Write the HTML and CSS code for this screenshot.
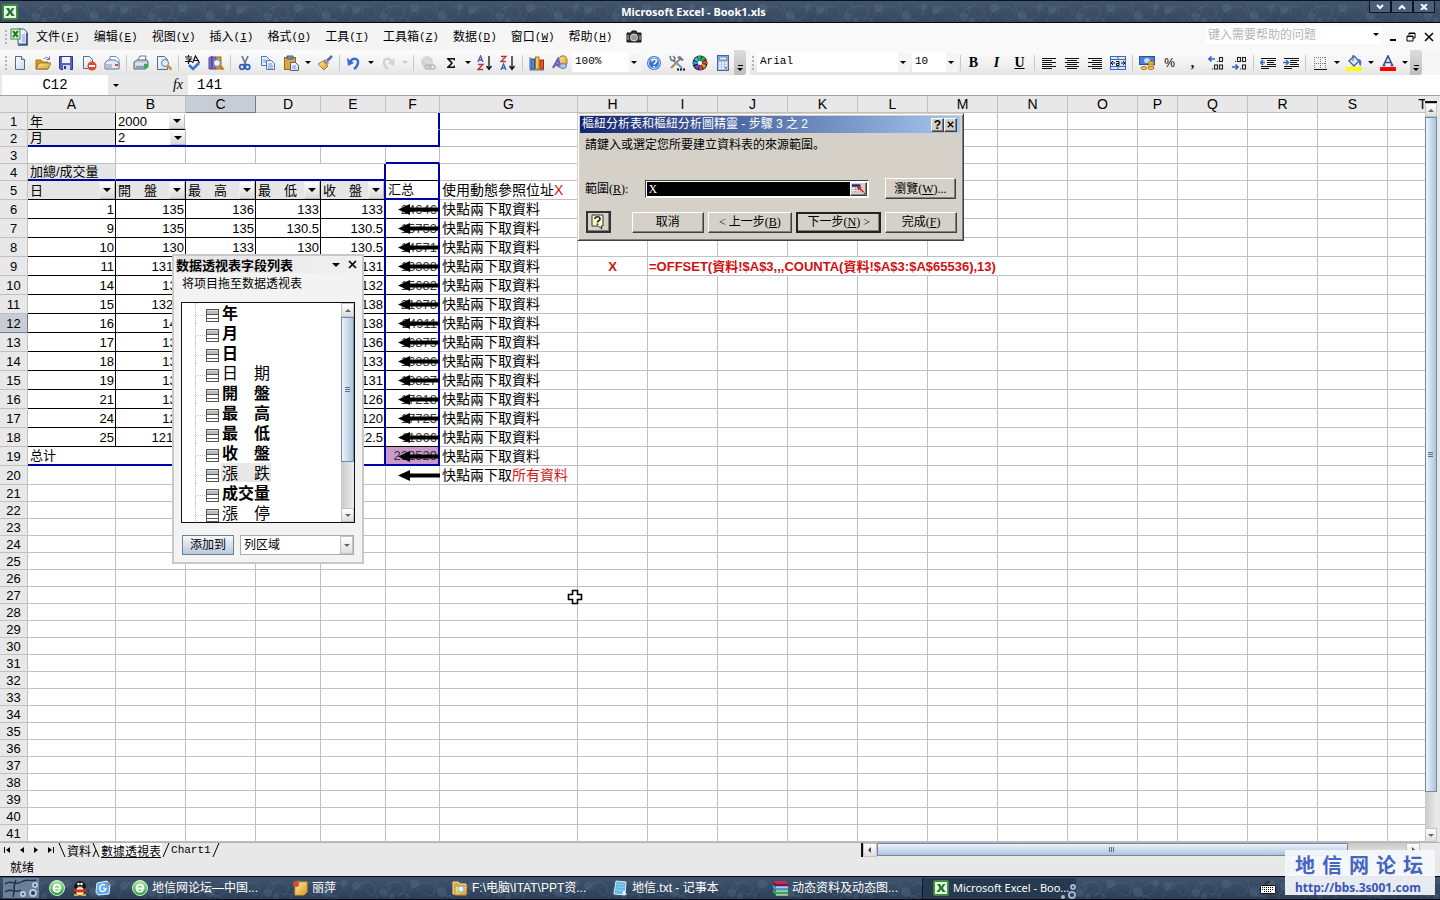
FILE: index.html
```
<!DOCTYPE html>
<html lang="zh">
<head>
<meta charset="utf-8">
<title>Microsoft Excel - Book1.xls</title>
<link rel="stylesheet" href="styles.css">
</head>
<body>
<svg class="defs" aria-hidden="true">
  <defs>
    <linearGradient id="paper" x1="0" y1="0" x2="1" y2="1"><stop offset="0" stop-color="#fff"/><stop offset="1" stop-color="#c9d8ee"/></linearGradient>
    <linearGradient id="gold" x1="0" y1="0" x2="1" y2="1"><stop offset="0" stop-color="#ffe9a0"/><stop offset="1" stop-color="#d99a28"/></linearGradient>
    <linearGradient id="orb" x1="0" y1="0" x2="0" y2="1"><stop offset="0" stop-color="#a8f0a0"/><stop offset="1" stop-color="#1f9a3a"/></linearGradient>
    <pattern id="floral" width="116" height="24" patternUnits="userSpaceOnUse">
      <g fill="none" stroke="#8ba3bd" stroke-opacity=".16">
        <path d="M2 22C8 2 26 2 28 12c1 8-10 8-9 1M28 24C32 6 50 0 56 9c3 7-6 11-9 5M58 22c4-14 20-22 28-12 4 8-7 12-10 5M88 2c-2 14 14 22 22 12 4-7-5-12-9-5"/>
        <path d="M10 4c5 2 6 6 3 9M38 3c5 3 5 8 1 12M68 2c4 4 4 9 0 12M98 20c4-2 8 0 9 3M50 20c3-4 9-4 11 0"/>
      </g>
      <g fill="#8ba3bd" fill-opacity=".15"><circle cx="36" cy="16" r="4"/><circle cx="44" cy="19" r="3"/><circle cx="8" cy="9" r="4"/><circle cx="66" cy="7" r="4"/><circle cx="94" cy="15" r="5"/><circle cx="112" cy="6" r="3"/></g>
    </pattern>
    <symbol id="i-excel" viewBox="0 0 16 16"><rect x="1" y="1" width="14" height="14" rx="1" fill="#e9f5e4" stroke="#3f8a3c" stroke-width="2"/><path d="M4 4h3l1.500 2.500L10 4h2.500L9.800 8l2.900 4H9.600L8 9.500 6.300 12H3.500l3-4z" fill="#1e7a2a"/></symbol>
    <symbol id="i-book" viewBox="0 0 18 18"><path d="M8 1h6l3 3v12H8z" fill="url(#paper)" stroke="#3f5f96"/><path d="M17 5v12H8" fill="none" stroke="#2c4a80" stroke-width="1.500"/><path d="M12 7h3M12 9h3M12 11h3M12 13h3" stroke="#8aa3cc"/><rect x="1" y="1" width="9" height="10" fill="#e3f3de" stroke="#3f8a3c"/><path d="M3 3l5 6M8 3L3 9" stroke="#1e7a2a" stroke-width="2"/></symbol>
    <symbol id="i-new" viewBox="0 0 16 16"><path d="M3.500 1.500h6l3 3v10h-9z" fill="url(#paper)" stroke="#55698c"/><path d="M9.500 1.500v3h3" fill="#fff" stroke="#55698c"/></symbol>
    <symbol id="i-open" viewBox="0 0 16 16"><path d="M1 5h5l1 2h6v7H1z" fill="#d79a2c" stroke="#a2741c"/><path d="M1 14l3-6h12l-3 6z" fill="url(#gold)" stroke="#a2741c"/><path d="M9 4c1-2 4-2 5 0M14.500 1.500V4.500h-3" fill="none" stroke="#5572a8"/></symbol>
    <symbol id="i-save" viewBox="0 0 16 16"><path d="M1.500 1.500h13v13h-12l-1-1z" fill="#5b5fc4" stroke="#33358a"/><rect x="4" y="2" width="8" height="6" fill="#f2f4ff"/><rect x="5" y="10" width="7" height="5" fill="#d5d9ee"/><rect x="6" y="11" width="2" height="3" fill="#33358a"/></symbol>
    <symbol id="i-perm" viewBox="0 0 16 16"><path d="M2.500 1.500h6l3 3v9h-9z" fill="url(#paper)" stroke="#55698c"/><circle cx="11" cy="11" r="4.500" fill="#dc4a26"/><path d="M8 11h6" stroke="#fff" stroke-width="2"/></symbol>
    <symbol id="i-mail" viewBox="0 0 16 16"><path d="M6 1.500h6l3 3v7H6z" fill="#fff" stroke="#788bb0"/><path d="M1 8l3-3h7l4 3v6H1z" fill="#e4ebf6" stroke="#61779f"/><path d="M2 10h6M2 12h6" stroke="#8295b8"/><rect x="11" y="9" width="3" height="2" fill="#d64b31"/></symbol>
    <symbol id="i-print" viewBox="0 0 16 16"><path d="M5 5l2-4h6l-1 5" fill="#fff" stroke="#667a9a"/><path d="M1 7l3-2h10l1 2v5l-3 2H1z" fill="#c3cddb" stroke="#55657e"/><path d="M2 9h9" stroke="#fff"/><path d="M3 12h8" stroke="#5c6f8f"/><rect x="11" y="9" width="4" height="4" fill="#35b34a"/></symbol>
    <symbol id="i-preview" viewBox="0 0 16 16"><path d="M1.500 1.500h7l3 3v10h-10z" fill="url(#paper)" stroke="#55698c"/><circle cx="9" cy="8" r="3.500" fill="#dff0fb" stroke="#697c94"/><path d="M11.500 10.500l4 4" stroke="#d58d37" stroke-width="2.500"/></symbol>
    <symbol id="i-spell" viewBox="0 0 16 16"><path d="M0 2h7M3.500 0v2M1 4h5L3.500 6v3M0 6.500h7M7.500 8l3-7 4 7M9 5.500h5" fill="none" stroke="#111" stroke-width="1.200"/><path d="M4 10l4 4 6-6" fill="none" stroke="#3a72cf" stroke-width="2.600"/></symbol>
    <symbol id="i-research" viewBox="0 0 16 16"><path d="M1 3l3-2v13H1zM4 2h4v12H4z" fill="#8270c5" stroke="#54469a"/><rect x="8" y="2" width="5" height="12" fill="#e1a43c" stroke="#996d1e"/><circle cx="9" cy="8" r="3.500" fill="#e4f3fc" stroke="#697c94"/><path d="M11.500 10.500l4 4" stroke="#c57b26" stroke-width="2.500"/></symbol>
    <symbol id="i-cut" viewBox="0 0 16 16"><path d="M5 1l4 9M11 1L7 10" stroke="#6a7c94" stroke-width="1.800"/><circle cx="5" cy="12" r="2.300" fill="none" stroke="#2b5cb5" stroke-width="1.700"/><circle cx="10.500" cy="12" r="2.300" fill="none" stroke="#2b5cb5" stroke-width="1.700"/></symbol>
    <symbol id="i-copy" viewBox="0 0 16 16"><path d="M1.500 1.500h5l3 3v6h-8z" fill="#eaf1fd" stroke="#4c72b8"/><path d="M6.500 5.500h5l3 3v6h-8z" fill="#eaf1fd" stroke="#4c72b8"/><path d="M3 5h3M3 7h3M8 9h4M8 11h5M8 13h5" stroke="#6d91d2"/></symbol>
    <symbol id="i-paste" viewBox="0 0 16 16"><rect x="1.500" y="2.500" width="11" height="12" fill="#dca53e" stroke="#936a1d"/><path d="M4 1h6v3H4z" fill="#8090a8" stroke="#4b5a74"/><path d="M7.500 7.500h5l3 3v5h-8z" fill="url(#paper)" stroke="#4c5f88"/><path d="M9 11h4M9 13h4" stroke="#7f97c0"/></symbol>
    <symbol id="i-brush" viewBox="0 0 16 16"><path d="M15 1l-5 5" stroke="#6d63b5" stroke-width="2.500"/><path d="M8 4l4 4-2 2-4-4z" fill="#8b94a8"/><path d="M6 6l5 5-4 4-6-6z" fill="url(#gold)" stroke="#a08530"/></symbol>
    <symbol id="i-undo" viewBox="0 0 16 16"><path d="M4 8c2-6 9-5 8 0-.500 3-2.500 5-4 6" fill="none" stroke="#3a6ad0" stroke-width="2.500"/><path d="M1 3l1 8 6-3z" fill="#3a6ad0"/></symbol>
    <symbol id="i-redo" viewBox="0 0 16 16"><path d="M12 8c-2-6-9-5-8 0 .500 3 2.500 5 4 6" fill="none" stroke="#d2d2d2" stroke-width="2.500"/><path d="M15 3l-1 8-6-3z" fill="#d2d2d2"/></symbol>
    <symbol id="i-link" viewBox="0 0 16 16"><circle cx="7" cy="7" r="6" fill="#d4d4d4"/><path d="M3 4c4 2 5 4 8 3" stroke="#e8e8e8" fill="none"/><rect x="5" y="10" width="6" height="4" rx="2" fill="none" stroke="#bbb" stroke-width="1.500"/><rect x="9" y="10" width="6" height="4" rx="2" fill="none" stroke="#bbb" stroke-width="1.500"/></symbol>
    <symbol id="i-sum" viewBox="0 0 16 16"><path d="M12 5.500V3H4v1l4 4-4 4v1h8v-2.500h-1l-.500 1H7L10 8 7 4.500h3.500l.500 1z" fill="#111"/></symbol>
    <symbol id="i-az" viewBox="0 0 16 16"><path d="M1 7l2.500-6L6 7M2 5h3" fill="none" stroke="#3b5fae" stroke-width="1.300"/><path d="M1 9.500h5l-5 5h5" fill="none" stroke="#b03a3a" stroke-width="1.300"/><path d="M12 1v12M9.500 11l2.500 3.500 2.500-3.500" fill="none" stroke="#111" stroke-width="1.300"/></symbol>
    <symbol id="i-za" viewBox="0 0 16 16"><path d="M1 1.500h5l-5 5h5" fill="none" stroke="#b03a3a" stroke-width="1.300"/><path d="M1 15l2.500-6L6 15M2 13h3" fill="none" stroke="#3b5fae" stroke-width="1.300"/><path d="M12 1v12M9.500 11l2.500 3.500 2.500-3.500" fill="none" stroke="#111" stroke-width="1.300"/></symbol>
    <symbol id="i-chart" viewBox="0 0 16 16"><path d="M1 2v13h14" fill="none" stroke="#4a6db0"/><rect x="2" y="4" width="3.500" height="10" fill="#4e8ae0" stroke="#2b5294"/><rect x="6.500" y="2" width="3.500" height="12" fill="#f6c44c" stroke="#a77417"/><rect x="11" y="5" width="3.500" height="9" fill="#e0562c" stroke="#96300f"/></symbol>
    <symbol id="i-draw" viewBox="0 0 16 16"><path d="M6 5l3-4h4l2 3v5l-4 3H6z" fill="url(#gold)" stroke="#a07b2b"/><path d="M1 13L6 4l3 9M3 10h5" fill="none" stroke="#6465bd" stroke-width="2.300"/><ellipse cx="11" cy="11" rx="3.500" ry="2.500" fill="#b9c2e8" stroke="#6876b0"/></symbol>
    <symbol id="i-help" viewBox="0 0 16 16"><circle cx="8" cy="8" r="7" fill="#3c74d4"/><circle cx="8" cy="8" r="5.500" fill="none" stroke="#cfe0fa"/><path d="M5.700 6.500c0-3 4.800-3 4.800-.400 0 1.700-2.300 1.700-2.300 3.400M8.200 11v1.500" fill="none" stroke="#fff" stroke-width="1.600"/></symbol>
    <symbol id="i-tools" viewBox="0 0 16 16"><path d="M2 13L11 4" stroke="#a98a53" stroke-width="2.200"/><path d="M8 2l3-1 4 4-2 1-3-2z" fill="#63758f"/><path d="M4 5l9 8" stroke="#7e93ae" stroke-width="2"/><path d="M1 1l1 4 3 1 1-3-2-2" fill="none" stroke="#61748c" stroke-width="1.500"/><path d="M8 14.500h2M11 14.500h2M14 14.500h2" stroke="#111" stroke-width="2"/></symbol>
    <symbol id="i-wheel" viewBox="0 0 16 16"><circle cx="8" cy="8" r="7.500" fill="#151515"/><path d="M8 8L5 1.500A7 7 0 0 1 9 1z" fill="#17b890"/><path d="M8 8l2-7 4 3z" fill="#2ca84e"/><path d="M8 8l6.500-3 .500 4z" fill="#e34b2c"/><path d="M8 8l6.500 2-2.500 4z" fill="#e98d2a"/><path d="M8 8l3 6.500-4 .500z" fill="#d13d83"/><path d="M8 8l-2 6.500-4-3z" fill="#6d4fc4"/><path d="M8 8l-7 2 .500-4z" fill="#3a9be0"/><path d="M8 8L2 5l2.500-3z" fill="#2fd0c0"/><circle cx="8" cy="8" r="2" fill="#fff"/></symbol>
    <symbol id="i-calc" viewBox="0 0 16 16"><rect x="2.500" y=".500" width="11" height="15" fill="#a9c3f0" stroke="#4464a4"/><rect x="4" y="2" width="8" height="3" fill="#f2f7ff" stroke="#5b79b4"/><path d="M4 8h8M4 10.500h8M4 13h8" stroke="#fff" stroke-width="1.700" stroke-dasharray="2 1"/><path d="M10 13h2" stroke="#d04a35" stroke-width="1.700"/></symbol>
    <symbol id="i-left" viewBox="0 0 16 16"><path d="M1 3.500h14M1 5.500h10M1 7.500h14M1 9.500h10M1 11.500h14M1 13.500h10" stroke="#111"/></symbol>
    <symbol id="i-center" viewBox="0 0 16 16"><path d="M1 3.500h14M3 5.500h10M1 7.500h14M3 9.500h10M1 11.500h14M3 13.500h10" stroke="#111"/></symbol>
    <symbol id="i-right" viewBox="0 0 16 16"><path d="M1 3.500h14M5 5.500h10M1 7.500h14M5 9.500h10M1 11.500h14M5 13.500h10" stroke="#111"/></symbol>
    <symbol id="i-merge" viewBox="0 0 16 16"><rect x=".500" y="1.500" width="15" height="13" fill="#dbe7fa" stroke="#3e69b5"/><path d="M0 4.500h16M0 11.500h16M8 1v3M8 12v3" stroke="#3e69b5"/><path d="M1 8h4M3 6L1 8l2 2M15 8h-4M13 6l2 2-2 2M6 6.500h3v4H6.500v-2H9" fill="none" stroke="#111"/></symbol>
    <symbol id="i-money" viewBox="0 0 16 16"><rect x=".500" y="1.500" width="15" height="8" fill="#4c7dd2" stroke="#2f549c"/><ellipse cx="8" cy="5.500" rx="3" ry="2.500" fill="#c6dafa"/><ellipse cx="12" cy="8" rx="3" ry="1.500" fill="#f8cd55" stroke="#a9781c"/><ellipse cx="12" cy="10.500" rx="3" ry="1.500" fill="#f8cd55" stroke="#a9781c"/><ellipse cx="12" cy="13" rx="3" ry="1.500" fill="#f8cd55" stroke="#a9781c"/><ellipse cx="5" cy="13" rx="3" ry="1.500" fill="#f8cd55" stroke="#a9781c"/></symbol>
    <symbol id="i-decl" viewBox="0 0 16 16"><path d="M1 4h6M3.500 1.500L1 4l2.500 2.500" fill="none" stroke="#3566c4" stroke-width="1.700"/><g fill="none" stroke="#222" stroke-width="1.100"><rect x="11.500" y="2.500" width="3" height="4"/><rect x="6.500" y="10" width="3" height="4"/><rect x="11.500" y="10" width="3" height="4"/><path d="M9 6.500h1M4 14h1"/></g></symbol>
    <symbol id="i-decr" viewBox="0 0 16 16"><path d="M1 12h6M4.500 9.500L7 12l-2.500 2.500" fill="none" stroke="#3566c4" stroke-width="1.700"/><g fill="none" stroke="#222" stroke-width="1.100"><rect x="6.500" y="2.500" width="3" height="4"/><rect x="11.500" y="2.500" width="3" height="4"/><rect x="11.500" y="10" width="3" height="4"/><path d="M4 6.500h1M9 14h1"/></g></symbol>
    <symbol id="i-outdent" viewBox="0 0 16 16"><path d="M1 3.500h15M7 5.500h9M7 7.500h7M7 9.500h9M1 11.500h15M1 13.500h8" stroke="#111"/><path d="M0 7.500h5M3 5L.500 7.500 3 10" fill="none" stroke="#3566c4" stroke-width="1.500"/></symbol>
    <symbol id="i-indent" viewBox="0 0 16 16"><path d="M1 3.500h15M7 5.500h9M7 7.500h7M7 9.500h9M1 11.500h15M1 13.500h8" stroke="#111"/><path d="M0 7.500h5M3 5l2.500 2.500L3 10" fill="none" stroke="#3566c4" stroke-width="1.500"/></symbol>
    <symbol id="i-borders" viewBox="0 0 16 16"><path d="M2 2.500h12M2 8.500h12M2.500 2v12M8.500 2v12M13.500 2v12" stroke="#777" stroke-dasharray="1 1" fill="none"/><path d="M2 14.500h13" stroke="#111"/></symbol>
    <symbol id="i-fill" viewBox="0 0 16 16"><path d="M3 6l5-5 5 5-5 5z" fill="#dce8f8" stroke="#3c5f9e" stroke-width="1.300"/><path d="M7 6V0" stroke="#3c5f9e"/><path d="M12 4c4 0 4 4 2.500 7-2-1-1-4-3-5z" fill="#3f74cf"/><path d="M0 12h16v4H0z" fill="#ff0"/></symbol>
    <symbol id="i-color" viewBox="0 0 16 16"><path d="M3.500 10.500L8 1l4.500 9.500M5 7.500h6M2.500 10.500h3M10.500 10.500h3" fill="none" stroke="#34548c" stroke-width="1.700"/><path d="M0 12h16v4H0z" fill="red"/></symbol>
    <symbol id="i-camera" viewBox="0 0 16 16"><path d="M1 4h4l1-2h4l1 2h4v9H1z" fill="#333" stroke="#111"/><circle cx="8" cy="8.500" r="3.500" fill="#999" stroke="#ddd"/><path d="M2 6v5M14 6v5" stroke="#bbb"/></symbol>
    <symbol id="i-browser" viewBox="0 0 16 16"><circle cx="8" cy="8" r="7.500" fill="url(#orb)" stroke="#d8f0d8"/><path d="M4.500 8.500h7c0-5-7-5-7 0 0 4 5 4 6.500 1.500" fill="none" stroke="#fff" stroke-width="1.800"/></symbol>
    <symbol id="i-penguin" viewBox="0 0 16 16"><ellipse cx="8" cy="8" rx="6" ry="7" fill="#141414"/><ellipse cx="8" cy="11" rx="4" ry="4" fill="#fff"/><circle cx="6.500" cy="4" r="1.300" fill="#fff"/><circle cx="9.500" cy="4" r="1.300" fill="#fff"/><path d="M5.500 6.500h5L8 8z" fill="#f2a51c"/><path d="M2 8c3 2 9 2 12 0v3c-3 2-9 2-12 0z" fill="#d9301e"/><path d="M2 14h5v2H2zM9 14h5v2H9z" fill="#f2a51c"/></symbol>
    <symbol id="i-mailer" viewBox="0 0 16 16"><path d="M2 3l10-2 3 3-1 10-11 1-2-3z" fill="#5cacf0" stroke="#e3f3ff"/><path d="M10 5c-4-2-6 2-5 5 1 2 5 2 6-1l-3-1" fill="none" stroke="#fff" stroke-width="1.500"/><path d="M13 3l2 2" stroke="#e55b2c" stroke-width="2"/></symbol>
    <symbol id="i-note" viewBox="0 0 16 16"><path d="M3 2h12v10l-3 3H3z" fill="url(#gold)" stroke="#d99a28"/><circle cx="4" cy="4" r="3" fill="#d84832"/></symbol>
    <symbol id="i-folder" viewBox="0 0 16 16"><path d="M1 2h5l2 2h6v10H1z" fill="#e5a93b" stroke="#ffe39a"/><path d="M3 6h12l-1 9H3z" fill="url(#gold)" stroke="#c89032"/><circle cx="9" cy="9" r="3" fill="#dff3fb" stroke="#8fb6c8"/></symbol>
    <symbol id="i-notepad" viewBox="0 0 16 16"><path d="M4 1l10 1-1 13-11-1z" fill="#67b7e8" stroke="#d5effc"/><path d="M5 4l7 .500M5 7l7 .500M4 10l7 .500" stroke="#8fd0f2"/><path d="M12 10l3 5-5-1z" fill="#f0f8ff"/></symbol>
    <symbol id="i-rar" viewBox="0 0 16 16"><path d="M1 1h12l3 3H4z" fill="#c72a61"/><path d="M4 4h12v2H4zM1 1l3 3v2L1 4z" fill="#7e1438"/><path d="M1 5l3 2h12v3H4L1 8z" fill="#3c9ee0"/><path d="M1 9l3 2h12v4H4l-3-3z" fill="#33a846"/><path d="M4 7h12M4 11h12M4 15h12" stroke="#fff"/></symbol>
    <symbol id="i-keyboard" viewBox="0 0 16 16"><path d="M5 4c0-2 3-2 5-2" stroke="#111" fill="none"/><rect x=".500" y="5.500" width="15" height="8" rx="1" fill="#fff" stroke="#111"/><path d="M2 7.500h12M2 9.500h12M4 11.500h8" stroke="#111" stroke-dasharray="1 1"/></symbol>
    <symbol id="i-field" viewBox="0 0 14 14"><rect x=".500" y="1.500" width="12" height="12" fill="#fff" stroke="#555"/><path d="M1 3.500h11M1 5h11" stroke="#bbb" stroke-width="2"/><path d="M1 6.500h11M1 10.500h11" stroke="#555"/></symbol>
    <symbol id="i-x" viewBox="0 0 9 9"><path d="M1 1l7 7M8 1L1 8" stroke="currentColor" stroke-width="1.700"/></symbol>
    <symbol id="i-arrow" viewBox="0 0 42 11"><path d="M0 5.500L12 0v11z"/><path d="M10 3.500h32v4H10z"/></symbol>
  </defs>
</svg>

<header class="titlebar">
  <svg class="floral" aria-hidden="true"><rect width="100%" height="100%" fill="url(#floral)"/></svg>
  <svg class="icon"><use href="#i-excel"/></svg>
  <h1>Microsoft Excel - Book1.xls</h1>
  <div class="winbtns">
    <button aria-label="最小化"><svg viewBox="0 0 8 6"><path d="M1 1l3 3 3-3"/></svg></button>
    <button aria-label="还原"><svg viewBox="0 0 8 6"><path d="M1 5l3-3 3 3"/></svg></button>
    <button aria-label="关闭"><svg viewBox="0 0 8 6"><path d="M1 0l6 6M7 0L1 6"/></svg></button>
  </div>
</header>

<nav class="menubar">
  <i class="grip"></i>
  <svg class="book"><use href="#i-book"/></svg>
  <div class="menus">
    <button>文件<kbd>(<u>F</u>)</kbd></button><button>编辑<kbd>(<u>E</u>)</kbd></button><button>视图<kbd>(<u>V</u>)</kbd></button><button>插入<kbd>(<u>I</u>)</kbd></button><button>格式<kbd>(<u>O</u>)</kbd></button><button>工具<kbd>(<u>T</u>)</kbd></button><button>工具箱<kbd>(<u>Z</u>)</kbd></button><button>数据<kbd>(<u>D</u>)</kbd></button><button>窗口<kbd>(<u>W</u>)</kbd></button><button>帮助<kbd>(<u>H</u>)</kbd></button>
    <button aria-label="照相机"><svg class="icon"><use href="#i-camera"/></svg></button>
  </div>
  <div class="ask"><input type="text" aria-label="帮助问题" placeholder="键入需要帮助的问题"><b class="tri"></b></div>
  <div class="docbtns">
    <button aria-label="最小化窗口"><svg viewBox="0 0 10 10"><path d="M2 8h6" stroke-width="2"/></svg></button>
    <button aria-label="还原窗口"><svg viewBox="0 0 10 10"><path d="M3 3V1h6v5H7M3 1.500h6M1 4h6v5H1zM1 4.500h6"/></svg></button>
    <button aria-label="关闭窗口"><svg viewBox="0 0 10 10"><path d="M1 1l8 8M9 1L1 9" stroke-width="1.500"/></svg></button>
  </div>
</nav>

<div class="toolbars">
  <div class="toolbar" id="standard"></div>
  <div class="toolbar" id="formatting"></div>
</div>

<div class="formulabar">
  <input class="namebox" aria-label="名称框" value="C12">
  <div class="fx"><b class="tri"></b><i>fx</i></div>
  <input class="formula" aria-label="编辑栏" value="141">
</div>

<main class="sheet">
  <div class="grid">
    <table id="cells"></table>
  </div>
  <div class="vscroll">
    <div class="split"></div><button class="sb" aria-label="向上"><b class="up"></b></button>
    <div class="track"><div class="thumb"></div></div>
    <button class="sb" aria-label="向下"><b class="down"></b></button>
  </div>

  <section class="fields">
    <header><h2>数据透视表字段列表</h2><b class="tri"></b><button aria-label="关闭"><svg viewBox="0 0 9 9"><use href="#i-x"/></svg></button></header>
    <p>将项目拖至数据透视表</p>
    <div class="listbox">
      <ul>
        <li class="used">年</li><li class="used">月</li><li class="used">日</li><li>日　期</li><li class="used">開　盤</li><li class="used">最　高</li><li class="used">最　低</li><li class="used">收　盤</li><li class="current">漲　跌</li><li class="used">成交量</li><li>漲　停</li>
      </ul>
      <div class="listscroll">
        <button class="sb" aria-label="向上"><b class="up"></b></button>
        <div class="track"><div class="thumb"></div></div>
        <button class="sb" aria-label="向下"><b class="down"></b></button>
      </div>
    </div>
    <footer><button class="add">添加到</button><div class="area"><select aria-label="区域"><option>列区域</option></select><span class="sb"><b class="down"></b></span></div></footer>
  </section>

  <section class="wizard" role="dialog" aria-labelledby="wiz">
    <header><h2 id="wiz">樞紐分析表和樞紐分析圖精靈 - 步驟 3 之 2</h2><button aria-label="說明">?</button><button aria-label="關閉"><svg viewBox="0 0 9 9"><use href="#i-x"/></svg></button></header>
    <p>請鍵入或選定您所要建立資料表的來源範圍。</p>
    <div class="range">
      <label for="range">範圍(<u>R</u>):</label>
      <div class="ref"><input id="range" value="X"><button aria-label="摺疊"><svg viewBox="0 0 16 12"><path d="M1 1h9v3H1z" fill="#162a7a"/><path d="M1 4h9v5H1M5 4v5M1 6.500h9" fill="#fff" stroke="#aaa"/><path d="M6 3l6 1-2 1 4 4-1 1-4-4-1 2z" fill="#e01818"/><path d="M14 10h1v1h-1z"/></svg></button></div>
      <button class="w">瀏覽(<u>W</u>)...</button>
    </div>
    <div class="steps">
      <button class="tip" aria-label="說明"><svg viewBox="0 0 16 16"><path d="M2 1h11v11h-2l1 3-4-3H2z" fill="#ffffb8" stroke="#333"/><path d="M5 5c0-3 5-3 5 0 0 2-2.500 1.500-2.500 3.500M7.500 9.500V11" fill="none" stroke="#16207a" stroke-width="1.700"/></svg></button>
      <button class="n">取消</button><button class="m">&lt; 上一步(<u>B</u>)</button><button class="m default">下一步(<u>N</u>) &gt;</button><button class="n">完成(<u>F</u>)</button>
    </div>
  </section>

  <svg class="cursor" viewBox="0 0 16 16"><path d="M5.500 1.500h5v4h4v5h-4v4h-5v-4h-4v-5h4z" fill="#fff" stroke="#000" stroke-width="1.600"/></svg>
</main>

<div class="tabbar">
  <div class="nav">
    <button aria-label="第一个"><svg viewBox="0 0 6 6"><path d="M0 0h1v6H0zM6 0v6L2 3z"/></svg></button>
    <button aria-label="上一个"><svg viewBox="0 0 6 6"><path d="M5 0v6L1 3z"/></svg></button>
    <button aria-label="下一个"><svg viewBox="0 0 6 6"><path d="M1 0v6l4-3z"/></svg></button>
    <button aria-label="最后一个"><svg viewBox="0 0 6 6"><path d="M0 0v6l4-3zM5 0h1v6H5z"/></svg></button>
  </div>
  <div class="tabs">
    <svg class="edge" viewBox="0 0 8 14"><path d="M1 0l6 14"/></svg><button>資料</button><svg class="edge" viewBox="0 0 8 14"><path d="M1 0l6 14M1 14l3-7"/></svg><button class="on">數據透視表</button><svg class="edge" viewBox="0 0 8 14"><path d="M7 0L1 14"/></svg><button class="latin">Chart1</button><svg class="edge" viewBox="0 0 8 14"><path d="M7 0L1 14"/></svg>
  </div>
  <div class="hscroll">
    <button class="sb" aria-label="向左"><b class="lt"></b></button>
    <div class="track"><div class="thumb"></div></div>
    <button class="sb" aria-label="向右"><b class="rt"></b></button>
  </div>
</div>

<div class="status"><span>就绪</span><span class="num">数字</span></div>

<footer class="taskbar">
  <svg class="floral" aria-hidden="true"><rect width="100%" height="100%" fill="url(#floral)"/></svg>
  <button class="start" aria-label="开始"><svg viewBox="0 0 36 20"><path d="M0 0h36v20H0z" fill="#6a809b"/><path d="M2 6c6-5 10 2 16-2s10 0 15-2M2 14c6-5 10 2 16-2M13 2c-3 5-1 11-3 17" fill="none" stroke="#22344a" stroke-width="1.500"/><g fill="#273b53" stroke="#b7c8da" stroke-width="2"><circle cx="20" cy="16" r="2"/><circle cx="30" cy="15" r="3"/><circle cx="32" cy="7" r="2"/></g></svg></button>
  <div class="quick">
    <button aria-label="浏览器"><svg class="icon"><use href="#i-browser"/></svg></button>
    <button aria-label="QQ"><svg class="icon"><use href="#i-penguin"/></svg></button>
    <button aria-label="邮件"><svg class="icon"><use href="#i-mailer"/></svg></button>
  </div>
  <div class="tasks">
    <button><svg class="icon"><use href="#i-browser"/></svg>地信网论坛—中国...</button>
    <button><svg class="icon"><use href="#i-note"/></svg>丽萍</button>
    <button><svg class="icon"><use href="#i-folder"/></svg>F:\电脑\ITAT\PPT资...</button>
    <button><svg class="icon"><use href="#i-notepad"/></svg>地信.txt - 记事本</button>
    <button><svg class="icon"><use href="#i-rar"/></svg>动态资料及动态图...</button>
    <button class="active"><svg class="icon"><use href="#i-excel"/></svg>Microsoft Excel - Boo...<svg class="flowers" viewBox="0 0 18 18"><g fill="#273b53" stroke="#9fb6cb" stroke-width="2"><circle cx="13" cy="5" r="2"/><circle cx="12" cy="13" r="3"/><circle cx="3" cy="15" r="1"/></g></svg></button>
  </div>
  <svg class="icon keyboard"><use href="#i-keyboard"/></svg>
</footer>

<aside class="watermark"><strong>地信网论坛</strong><a href="#">http://bbs.3s001.com</a></aside>
<script src="app.js"></script>
</body>
</html>
```
FILE: styles.css
```
* { box-sizing: border-box; }
body {
  margin: 0; height: 100vh; display: flex; flex-direction: column; overflow: hidden; position: relative;
  font: 12px/16px "Liberation Sans", "Noto Sans CJK SC", sans-serif; color: #000; background: #e8e8e8;
}
button, input, select { font: inherit; color: inherit; border: 0; padding: 0; margin: 0; background: none; border-radius: 0; }
h1, h2, p, ul { margin: 0; padding: 0; }
.defs { position: absolute; width: 0; height: 0; }
.icon { width: 16px; height: 16px; flex: none; display: block; }
.tri { width: 0; height: 0; flex: none; border: 3px solid transparent; border-top-color: #000; border-bottom: 0; }
.floral { position: absolute; inset: 0; width: 100%; height: 100%; }

.titlebar {
  flex: none; height: 23px; display: flex; align-items: center; padding-left: 2px; position: relative;
  background: linear-gradient(#43566e, #33475f); border-top: 1px solid #0b1220; border-bottom: 1px solid #05070c;
}
.titlebar > * { z-index: 1; }
.titlebar .floral { z-index: 0; }
.titlebar h1 { flex: 1; text-align: center; color: #fff; font: bold 11px/16px "Noto Sans", sans-serif; }
.winbtns { display: flex; align-self: flex-start; margin-right: 5px; }
.winbtns button { width: 22px; height: 12px; display: grid; place-items: center; border: 1px solid #0d1624; border-top: 0; background: #4c6079; }
.winbtns svg { width: 8px; height: 6px; fill: none; stroke: #fff; stroke-width: 2; }

.menubar { flex: none; height: 27px; display: flex; align-items: center; background: linear-gradient(90deg, #ececec, #f9f9f9 45%); }
.grip { width: 2px; height: 14px; margin: 0 3px 0 5px; flex: none; background: repeating-linear-gradient(#b4b4b4 0 2px, transparent 2px 4px); }
.book { width: 18px; height: 18px; flex: none; }
.menus { display: flex; gap: 14px; margin-left: 8px; flex: 1; }
.menus button { display: flex; align-items: center; }
kbd { font: 11px/16px "Liberation Mono", monospace; }
.ask { width: 176px; display: flex; align-items: center; justify-content: space-between; background: #fff; height: 18px; padding: 0 3px 0 2px; margin-bottom: 4px; }
.ask input { width: 150px; height: 16px; }
.ask input::placeholder { color: #b5b5b5; opacity: 1; }
.docbtns { display: flex; gap: 8px; margin: 0 6px; }
.docbtns button { width: 10px; height: 10px; }
.docbtns svg { width: 10px; height: 10px; display: block; fill: none; stroke: #000; }

.toolbars { flex: none; display: flex; height: 25px; gap: 4px; background: #f6f6f6; }
.toolbar { display: flex; align-items: center; background: linear-gradient(#fbfbfb, #f3f3f3 50%, #e4e4e4); border-radius: 0 3px 3px 0; }
.toolbar .grip { margin: 0 1px 0 5px; }
#formatting .grip { margin: 0 2px; }
.tool { width: 23px; height: 22px; display: grid; place-items: center; flex: none; font: bold 14px/16px "Liberation Serif", serif; }
.tool.percent { font: 12px/16px "Liberation Sans", sans-serif; }
.tool.italic { font-style: italic; }
.tool.under { text-decoration: underline; }
.drop { width: 11px; height: 22px; display: grid; place-items: center; flex: none; }
.drop.off .tri { border-top-color: #c8c8c8; }
.sep { width: 1px; height: 16px; margin: 0 2px 0 3px; flex: none; background: #c9c9c9; }
#formatting .size + .tri + .sep, #formatting .size + .sep { margin: 0 1px; }
.more { width: 12px; height: 25px; flex: none; display: flex; flex-direction: column; align-items: center; justify-content: flex-end; gap: 2px; padding-bottom: 4px; background: linear-gradient(#dcdcdc, #bdbdbd); border-radius: 0 3px 3px 0; }
.more::before { content: ""; width: 5px; height: 1px; background: #000; }
.combo { position: relative; display: flex; flex: none; height: 19px; margin: 0 1px; background: #fff; }
.combo select { appearance: none; width: 100%; padding: 0 0 3px 3px; font: 11px/16px "Liberation Mono", monospace; }
.combo .tri { position: absolute; right: 4px; top: 8px; z-index: 1; }
.combo::after { content: ""; position: absolute; right: 0; top: 0; width: 12px; height: 100%; background: #f4f4f4; }
.combo.zoom { width: 69px; }
.combo.font { width: 153px; }
.combo.size { width: 46px; }

.formulabar { flex: none; height: 20px; display: flex; padding-left: 2px; font: 14px/20px "Liberation Mono", monospace; }
.namebox { width: 106px; background: #fff; text-align: center; }
.fx { width: 80px; display: flex; align-items: center; justify-content: space-between; padding: 0 5px; font: 14px/18px "Liberation Serif", serif; }
.formula { flex: 1; min-width: 0; background: #fff; padding-left: 9px; }

.sheet { flex: 1; min-height: 0; display: flex; position: relative; border-top: 1px solid #a2a2a2; padding-right: 3px; }
.grid { flex: 1; min-width: 0; overflow: hidden; background: #fff; }
table { table-layout: fixed; border-collapse: separate; border-spacing: 0; width: 1458px; font: 13px/16px "Liberation Sans", "Noto Sans CJK TC", sans-serif; }
.c-head { width: 28px; } .c-a { width: 88px; } .c-std { width: 70px; } .c-de { width: 65px; } .c-f { width: 54px; } .c-g { width: 138px; } .c-p { width: 40px; }
th, td { height: 17px; padding: 0; border: solid #c0c0c0; border-width: 0 1px 1px 0; white-space: nowrap; overflow: visible; font-weight: 400; text-align: left; line-height: 15px; }
th { background: #e8e8e8; text-align: center; }
thead th { font-size: 14px; }
th.on { background: #c6cdd6; border-color: #6d7d8d; }
tr.tall > * { height: 19px; line-height: 17px; }
td > div { display: flex; align-items: center; justify-content: space-between; padding-left: 2px; line-height: 15px; height: 15px; }
tr.tall td > div { height: 17px; }
td .tri { border-width: 4px; border-bottom: 0; }
td button { width: 16px; height: 100%; display: grid; place-items: center; background: linear-gradient(#fafafa, #dadada); border: 1px solid #bbb; border-top-color: #fff; border-left-color: #eee; }
.r { text-align: right; padding-right: 1px; }
.gray { background: #e5e5e5; }
.black { border-color: #000; }
.bottom { border-bottom-color: #000; }
.right { border-right-color: #000; }
.open { border-right-color: #fff; }
.nobottom { border-bottom-color: #fff; }
.blue-r { border-right: 2px solid #0000a8; }
.blue-b { border-bottom: 2px solid #0000a8; }
.blue-r.blue-b { border-color: #0000a8; }
.open.blue-b { border-right: 0; }
.purple { background: #c99ac9; }
.sum { position: relative; color: #333; }
.sum svg { position: absolute; left: 12px; top: 4px; width: 42px; height: 11px; z-index: 1; }
.note { font-size: 14px; padding-left: 2px; }
.note em { font-style: normal; color: #d01818; }
.mark { color: #d01010; font-weight: 700; text-align: center; }
.expr { color: #d01010; font-weight: 700; padding-left: 1px; }

.sb { width: 14px; height: 14px; flex: none; display: grid; place-items: center; border: 1px solid #c3c3c3; background: linear-gradient(#fff, #dedede); }
.up, .down, .lt, .rt { width: 0; height: 0; border: 3px solid transparent; }
.up { border-bottom-color: #666; border-top: 0; }
.down { border-top-color: #666; border-bottom: 0; }
.lt { border-right-color: #444; border-left: 0; }
.rt { border-left-color: #444; border-right: 0; }
.vscroll { width: 12px; display: flex; flex-direction: column; flex: none; }
.vscroll .sb { width: 12px; }
.split { height: 7px; border-bottom: 2px solid #111; }
.track { flex: 1; min-height: 0; background: linear-gradient(90deg, #c9c9c9, #ececec); }
.thumb { position: relative; border: 1px solid #7089a5; background: linear-gradient(90deg, #edf4fb, #adc3dc); }
.thumb::after { content: ""; position: absolute; left: 50%; top: 50%; width: 5px; height: 5px; margin: -3px; background: repeating-linear-gradient(#5d6f86 0 1px, transparent 1px 2px); }
.vscroll .thumb { height: 95%; }

.fields { position: absolute; left: 172px; top: 158px; width: 192px; padding: 0 8px 7px; background: #f3f3f3; border: 2px solid #c8c8c8; }
.fields header { display: flex; align-items: center; height: 17px; margin: 0 -6px; background: linear-gradient(90deg, #e4e4e4, #f0f0f0); }
.fields h2 { flex: 1; font: bold 13px/17px "Noto Sans CJK SC", sans-serif; }
.fields header .tri { border-width: 4px; border-bottom: 0; }
.fields header button { width: 9px; height: 9px; margin: 0 3px 0 8px; }
.fields header svg { display: block; width: 9px; height: 9px; }
.fields p { padding: 2px 0 9px; line-height: 18px; }
.listbox { display: flex; height: 221px; width: 174px; border: 1px solid #111; background: #fff; overflow: hidden; margin-left: -1px; }
.listbox ul { flex: 1; list-style: none; font: 16px/18px "Noto Sans CJK TC", sans-serif; }
.listbox li { height: 20px; display: flex; align-items: flex-start; padding-left: 13px; }
.listbox .used { font-weight: 700; }
.listbox .tree { width: 11px; height: 20px; border-left: 1px dotted #bbb; flex: none; background: linear-gradient(90deg, #ccc 1px, transparent 1px) 0 12px / 2px 1px repeat-x; }
.listbox li svg { width: 14px; height: 14px; flex: none; margin: 5px 1px 0 0; }
.listbox li span { line-height: 19px; padding: 0 1px; }
.current span { background: #e8e8e8; }
.listscroll { width: 13px; display: flex; flex-direction: column; }
.listscroll .sb { width: 13px; }
.listscroll .thumb { height: 76%; }
.fields footer { display: flex; gap: 6px; margin-top: 12px; align-items: center; }
.add { width: 52px; height: 20px; border: 1px solid #6b8199; background: linear-gradient(#f6f9fc, #b9c8da); }
.area { flex: 1; height: 20px; display: flex; align-items: center; border: 1px solid #aaa; background: #fff; }
.area select { appearance: none; flex: 1; padding-left: 3px; min-width: 0; }
.area .sb { height: 18px; width: 13px; }

.wizard { position: absolute; left: 577px; top: 17px; width: 387px; padding: 2px 3px 7px 2px; background: #d5d1c8; border: 1px solid; border-color: #d5d1c8 #404040 #404040 #d5d1c8; box-shadow: inset 1px 1px #fff, inset -1px -1px #808080; font: 12px/16px "Liberation Serif", "Noto Sans CJK TC", serif; }
.wizard header { display: flex; align-items: center; height: 17px; padding: 0 3px 0 2px; background: linear-gradient(90deg, #12246c, #a4c8ee); color: #fff; }
.wizard h2 { flex: 1; font: 12px/17px "Liberation Sans", "Noto Sans CJK TC", sans-serif; }
.wizard button { background: #d5d1c8; border: 1px solid; border-color: #fff #404040 #404040 #fff; box-shadow: inset -1px -1px #808080; }
.wizard header button { width: 13px; height: 14px; display: grid; place-items: center; color: #000; font: bold 12px/12px "Liberation Sans", sans-serif; }
.wizard header svg { width: 7px; height: 7px; }
.wizard p { padding: 4px 5px 25px; }
.range, .steps { display: flex; align-items: center; padding: 0 4px 0 5px; }
.range label { width: 61px; }
.ref { flex: none; width: 224px; height: 18px; margin-right: 16px; display: flex; border: 1px solid; border-color: #404040 #fff #fff #404040; background: #fff; padding: 1px; }
.ref input { flex: 1; min-width: 0; background: #000; color: #fff; padding-left: 2px; }
.ref button { width: 17px; display: grid; place-items: center; }
.ref svg { width: 15px; height: 12px; }
.wizard .w, .wizard .n { width: 73px; height: 21px; }
.wizard .m { width: 86px; height: 21px; }
.steps { padding: 12px 3px 0 6px; gap: 4px; }
.wizard .tip { width: 25px; height: 22px; margin-right: 17px; border: 2px solid #333; display: grid; place-items: center; }
.tip svg { width: 16px; height: 16px; }
.wizard .default { border: 2px solid #222; }
.cursor { position: absolute; left: 567px; top: 493px; width: 16px; height: 16px; }

.tabbar { flex: none; height: 15px; display: flex; padding-right: 20px; border-top: 1px solid #b4b4b4; }
.nav { width: 58px; display: flex; justify-content: space-around; align-items: center; }
.nav button, .nav svg { width: 6px; height: 6px; display: block; }
.tabs { flex: 1; display: flex; }
.tabs button { line-height: 13px; padding: 0 1px; font-family: "Noto Sans CJK TC", sans-serif; }
.tabs .on { background: #fff; text-decoration: underline; }
.tabs .latin { font: 11px/13px "Liberation Mono", monospace; }
.edge { width: 8px; height: 14px; fill: none; stroke: #000; }
.hscroll { width: 39.4%; display: flex; border-left: 2px solid #111; }
.hscroll .track { background: linear-gradient(#c9c9c9, #ececec); }
.hscroll .thumb { width: 89%; height: 13px; background: linear-gradient(#edf4fb, #adc3dc); }
.hscroll .thumb::after { background: repeating-linear-gradient(90deg, #5d6f86 0 1px, transparent 1px 2px); }
.status { flex: none; height: 19px; display: flex; justify-content: space-between; align-items: center; padding: 2px 131px 0 10px; }
.status .num { color: #999; }

.taskbar { flex: none; height: 24px; display: flex; align-items: center; position: relative; padding: 0 164px 0 3px; color: #fff; background: linear-gradient(#40546d, #2b3f57); border-top: 1px solid #05070c; border-bottom: 1px solid #05070c; }
.taskbar > * { z-index: 1; }
.taskbar .floral { z-index: 0; }
.start, .start svg { width: 36px; height: 20px; display: block; }
.quick { display: flex; gap: 7px; margin: 0 11px 0 10px; }
.tasks { flex: 1; display: flex; min-width: 0; }
.tasks button { flex: 0 1 160px; display: flex; align-items: center; gap: 4px; padding-left: 10px; height: 21px; white-space: nowrap; position: relative; min-width: 0; font-size: 12px; }
.tasks .active { flex-basis: 154px; background: #26394f; border-left: 1px solid #0d1624; font: 11px/16px "Noto Sans", sans-serif; }
.flowers { position: absolute; right: -2px; bottom: -1px; width: 18px; height: 18px; }
.watermark { position: absolute; right: 5px; bottom: 5px; width: 150px; height: 45px; padding: 1px 12px 0 10px; background: rgba(245, 248, 252, .93); color: #4565c0; z-index: 2; font-family: "Noto Sans", "Noto Sans CJK SC", sans-serif; }
.watermark strong { display: block; font-size: 20px; line-height: 30px; font-weight: 700; text-align-last: justify; }
.watermark a { display: block; color: #3a55b4; font-size: 12px; line-height: 14px; font-weight: 700; text-decoration: none; }
```
FILE: app.js
```
const icon = (name) => `<svg class="icon"><use href="#i-${name}"/></svg>`;
const tri = '<b class="tri"></b>';
const parts = {
  "|": '<i class="sep"></i>',
  v: `<button class="drop" aria-label="更多选项">${tri}</button>`,
  x: `<button class="drop off" aria-label="更多选项">${tri}</button>`,
  end: `<button class="more" aria-label="工具栏选项">${tri}</button>`,
  grip: '<i class="grip"></i>',
  zoom: `<span class="combo zoom"><select aria-label="显示比例"><option>100%</option></select>${tri}</span>`,
  font: `<span class="combo font"><select aria-label="字体"><option>Arial</option></select>${tri}</span>`,
  size: `<span class="combo size"><select aria-label="字号"><option>10</option></select>${tri}</span>`,
  B: '<button class="tool">B</button>',
  I: '<button class="tool italic">I</button>',
  U: '<button class="tool under">U</button>',
  "%": '<button class="tool percent">%</button>',
  ",": '<button class="tool">,</button>',
};
const build = (id, list) => {
  document.getElementById(id).innerHTML = list.split(" ")
    .map((k) => parts[k] || `<button class="tool" aria-label="${k}">${icon(k)}</button>`).join("");
};
build("standard", "grip new open save perm mail | print preview | spell research | cut copy paste v brush | undo v redo x | link sum v az za | chart draw zoom help tools wheel calc end");
build("formatting", "grip font size | B I U | left center right merge | money % , decl decr | outdent indent | borders v fill v color v end");

document.querySelectorAll(".listbox li").forEach((li) => {
  li.innerHTML = `<i class="tree"></i><svg><use href="#i-field"/></svg><span>${li.textContent}</span>`;
});

const letters = "ABCDEFGHIJKLMNOPQRST".split("");
const colClass = { A: "c-a", D: "c-de", E: "c-de", F: "c-f", G: "c-g", P: "c-p" };
const data = {
  6: [1, 135, 136, 133, 133, 24646],
  7: [9, 135, 135, 130.5, 130.5, 15753],
  8: [10, 130, 133, 130, 130.5, 14571],
  9: [11, 131.5, "", "", 131, 13308],
  10: [14, 135, "", "", 132, 15682],
  11: [15, 132.5, "", "", 138, 21078],
  12: [16, 140, 141, "", 138, 24911],
  13: [17, 139, "", "", 136, 16875],
  14: [18, 135, "", "", 133, 16386],
  15: [19, 133, "", "", 131, 13827],
  16: [21, 130, "", "", 126, 17218],
  17: [24, 125, "", "", 120, 17725],
  18: [25, 121.5, "", "", 122.5, 11366],
};
const cells = {};
const put = (ref, cls, html = "") => { cells[ref] = [cls, html]; };
const dropdown = (text) => `<div>${text}<button aria-label="筛选">${tri}</button></div>`;
const arrow = '<svg><use href="#i-arrow"/></svg>';

put("A1", "gray black", "<div>年</div>");
put("B1", "bottom open", dropdown("2000"));
put("A2", "gray right blue-b", "<div>月</div>");
put("B2", "open blue-b", dropdown("2"));
["C", "D", "E"].forEach((c) => {
  put(c + 1, "open nobottom");
  put(c + 2, "open blue-b");
});
put("F1", "blue-r nobottom");
put("F2", "blue-r blue-b");
put("E3", "");
put("F3", "blue-b");
put("A4", "gray blue-b", "<div>加總/成交量</div>");
["B", "C", "D"].forEach((c) => put(c + 4, "open blue-b"));
put("E4", "blue-r blue-b");
put("F4", "blue-r bottom");
["日", "開　盤", "最　高", "最　低", "收　盤"].forEach((t, i) => {
  put(letters[i] + 5, "gray black" + (i === 4 ? " blue-r" : ""), dropdown(t));
});
put("F5", "blue-r blue-b", "<div>汇总</div>");
put("G5", "note", "使用動態參照位址<em>X</em>");
for (let r = 6; r <= 20; r++) {
  if (data[r]) {
    data[r].forEach((v, i) => {
      if (i < 5) put(letters[i] + r, "r black" + (i === 4 ? " blue-r" : ""), v);
      else put("F" + r, "r sum blue-r bottom", v + arrow);
    });
  }
  put("G" + r, "note", r < 20 ? "快點兩下取資料" : "快點兩下取<em>所有資料</em>");
}
["A", "B", "C", "D", "E"].forEach((c, i) => put(c + 19, (i === 4 ? "blue-r" : "open") + " blue-b", i ? "" : "<div>总计</div>"));
put("F19", "r sum purple blue-r blue-b", "232529" + arrow);
put("F20", "sum", arrow);
put("H9", "mark", "X");
put("I9", "expr open", "=OFFSET(資料!$A$3,,,COUNTA(資料!$A$3:$A$65536),13)");
["J", "K", "L", "M"].forEach((c) => put(c + 9, "open"));

let html = '<colgroup><col class="c-head">' + letters.map((c) => `<col class="${colClass[c] || "c-std"}">`).join("") + "</colgroup>";
html += "<thead><tr><th></th>" + letters.map((c) => `<th class="${c === "C" ? "on" : ""}">${c}</th>`).join("") + "</tr></thead><tbody>";
for (let r = 1; r <= 41; r++) {
  html += `<tr class="${r >= 5 && r <= 20 ? "tall" : ""}"><th class="${r === 12 ? "on" : ""}">${r}</th>`;
  letters.forEach((c) => {
    const [cls, body] = cells[c + r] || ["", ""];
    html += `<td class="${cls}">${body}</td>`;
  });
  html += "</tr>";
}
document.getElementById("cells").innerHTML = html + "</tbody>";
```
